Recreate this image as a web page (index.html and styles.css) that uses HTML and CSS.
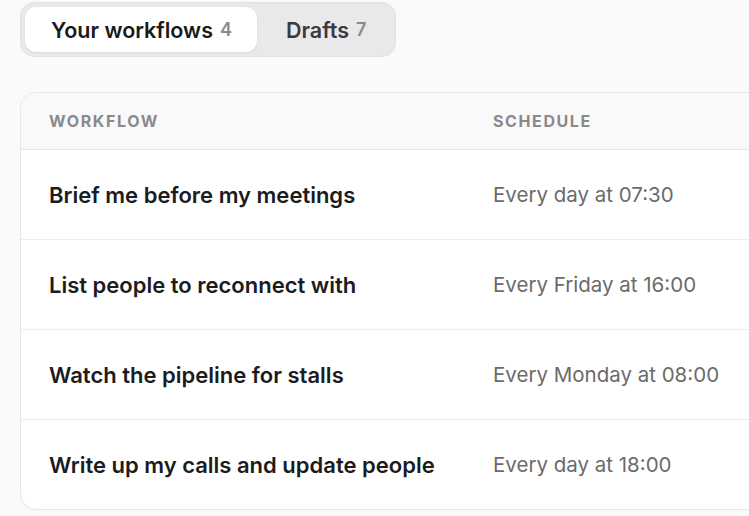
FILE: index.html
```html
<!DOCTYPE html>
<html>
<head>
<meta charset="utf-8">
<link rel="stylesheet" href="styles.css">
</head>
<body>
<div class="page">
  <div class="tabs">
    <div class="tab active">Your workflows <span class="count">4</span></div>
    <div class="tab">Drafts <span class="count">7</span></div>
  </div>
  <div class="card">
    <div class="row head">
      <div class="col-name">WORKFLOW</div>
      <div class="col-sched">SCHEDULE</div>
    </div>
    <div class="row">
      <div class="col-name title">Brief me before my meetings</div>
      <div class="col-sched sched">Every day at 07:30</div>
    </div>
    <div class="row">
      <div class="col-name title">List people to reconnect with</div>
      <div class="col-sched sched">Every Friday at 16:00</div>
    </div>
    <div class="row">
      <div class="col-name title">Watch the pipeline for stalls</div>
      <div class="col-sched sched">Every Monday at 08:00</div>
    </div>
    <div class="row">
      <div class="col-name title">Write up my calls and update people</div>
      <div class="col-sched sched">Every day at 18:00</div>
    </div>
  </div>
</div>
</body>
</html>
```
FILE: styles.css
```css
html, body {
  margin: 0;
  padding: 0;
  background: #fafafa;
  font-family: Inter, "Noto Sans", sans-serif;
}
.page {
  padding: 2px 0 0 20px;
  width: 749px;
  height: 516px;
  box-sizing: border-box;
  overflow: hidden;
}
.tabs {
  display: inline-flex;
  background: #e9e9ec;
  border: 1px solid #e2e2e5;
  border-radius: 14px;
  padding: 4px;
}
.tab {
  height: 45px;
  display: flex;
  align-items: center;
  padding: 0 25px 0 29px;
  font-size: 21.5px;
  font-weight: 600;
  color: #3a3a3c;
  border-radius: 11px;
}
.tab.active {
  background: #ffffff;
  color: #1a1a1a;
  box-shadow: 0 1px 2px rgba(0,0,0,0.08);
  padding: 0 25px 0 26px;
}
.count {
  color: #8a8a8e;
  font-size: 18px;
  margin-left: 7px;
}
.card {
  margin-top: 35px;
  width: 780px;
  background: #ffffff;
  border: 1px solid #e6e6e6;
  border-radius: 16px;
  overflow: hidden;
}
.row {
  display: flex;
  align-items: center;
  height: 89px;
  border-top: 1px solid #eeeeee;
  padding-left: 28px;
}
.row.head {
  height: 56px;
  border-top: none;
  border-bottom: 1px solid #e6e6e6;
  background: #f9f9f9;
  font-size: 16px;
  font-weight: 700;
  letter-spacing: 1.6px;
  color: #8a8a8a;
}
.row.head + .row {
  border-top: none;
}
.col-name {
  width: 444px;
}
.title {
  font-size: 22px;
  font-weight: 600;
  color: #1c1c1e;
}
.sched {
  font-size: 20.5px;
  color: #6b6b6b;
}
```
